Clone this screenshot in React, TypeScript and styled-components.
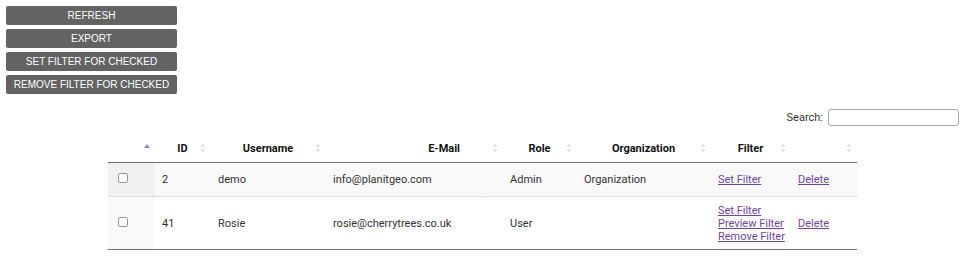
import React from "react";
import styled, { createGlobalStyle } from "styled-components";

interface IUser {
    id: number,
    username: string,
    email: string,
    role: string,
    organization: string,
    filters: string[]
}

const users: IUser[] = [
    { id: 2, username: "demo", email: "info@planitgeo.com", role: "Admin", organization: "Organization", filters: ["Set Filter"] },
    { id: 41, username: "Rosie", email: "rosie@cherrytrees.co.uk", role: "User", organization: "", filters: ["Set Filter", "Preview Filter", "Remove Filter"] },
];

const actions = ["REFRESH", "EXPORT", "SET FILTER FOR CHECKED", "REMOVE FILTER FOR CHECKED"];

// column widths taken from the header cells
const widths = [47, 56, 115, 177, 74, 134, 80, 66];

const SortIcon = ({ active }: { active?: boolean }) => (
    <svg width="6" height="10" viewBox="0 0 6 10">
        {active ? (
            <path d="M3 1 L6 5 L0 5 Z" fill="#8c8cd6" />
        ) : (
            <>
                <path d="M3 0.5 L5.5 4 L0.5 4 Z" fill="#e2e2e2" />
                <path d="M3 9.5 L5.5 6 L0.5 6 Z" fill="#e2e2e2" />
            </>
        )}
    </svg>
);

export default function App() {
    const headers = ["", "ID", "Username", "E-Mail", "Role", "Organization", "Filter", ""];

    return (
        <Page>
            <GlobalStyle />
            <Actions>
                {actions.map((a) => <ActionButton key={a}>{a}</ActionButton>)}
            </Actions>
            <SearchRow>
                <label>Search:</label>
                <SearchInput type="text" />
            </SearchRow>
            <Table>
                <colgroup>
                    {widths.map((w, i) => <col key={i} style={{ width: w }} />)}
                </colgroup>
                <thead>
                    <tr>
                        {headers.map((h, i) => (
                            <Th key={i}>
                                <HeadInner $right={h === "E-Mail"}>
                                    <span>{h}</span>
                                    <SortIcon active={i === 0} />
                                </HeadInner>
                            </Th>
                        ))}
                    </tr>
                </thead>
                <tbody>
                    {users.map((u, i) => (
                        <Row key={u.id} $odd={i % 2 == 0}>
                            <CheckCell $odd={i % 2 == 0}><Check type="checkbox" /></CheckCell>
                            <Td>{u.id}</Td>
                            <Td>{u.username}</Td>
                            <MailCell>{u.email}</MailCell>
                            <Td>{u.role}</Td>
                            <Td>{u.organization}</Td>
                            <Td>
                                {u.filters.map((f) => <LinkLine key={f}><Link href="#">{f}</Link></LinkLine>)}
                            </Td>
                            <Td><Link href="#">Delete</Link></Td>
                        </Row>
                    ))}
                </tbody>
            </Table>
        </Page>
    );
}

const GlobalStyle = createGlobalStyle`
    body {
        margin: 0;
        background: #fff;
        font-family: Roboto, "Liberation Sans", sans-serif;
    }
`

const Page = styled.div`
    width: 964px;
    height: 256px;
    overflow: hidden;
`

const Actions = styled.div`
    display: flex;
    flex-direction: column;
    gap: 4px;
    padding: 6px 0 0 6px;
`

const ActionButton = styled.button`
    width: 171px;
    height: 19px;
    padding: 0;
    border: none;
    border-radius: 2px;
    background: #636363;
    color: #fff;
    font-family: "Liberation Sans", Arial, sans-serif;
    font-size: 10px;
    line-height: 19px;
    text-align: center;
`

const SearchRow = styled.div`
    display: flex;
    justify-content: flex-end;
    align-items: center;
    gap: 5px;
    margin-top: 15px;
    padding-right: 5px;
    font-size: 11px;
    color: #333;
`

const SearchInput = styled.input`
    box-sizing: border-box;
    width: 131px;
    height: 17px;
    border: 1px solid #aaa;
    border-radius: 3px;
    padding: 0 4px;
    background: #fff;
`

const Table = styled.table`
    margin: 8px 0 0 108px;
    width: 749px;
    table-layout: fixed;
    border-collapse: collapse;
    font-size: 11px;
    color: #333;
    border-bottom: 1px solid #6e6e6e;
`

const Th = styled.th`
    height: 28px;
    padding: 0 5px 0 10px;
    border-bottom: 1px solid #6e6e6e;
    font-weight: bold;
    color: #111;
    vertical-align: middle;
`

const HeadInner = styled.div<{ $right?: boolean }>`
    display: grid;
    grid-template-columns: 1fr 6px;
    align-items: center;

    span {
        text-align: ${(p) => (p.$right ? "right" : "center")};
        padding-right: ${(p) => (p.$right ? "32px" : "0")};
    }

    svg {
        display: block;
    }
`

const Row = styled.tr<{ $odd: boolean }>`
    background: ${(p) => (p.$odd ? "#f9f9f9" : "#fff")};
    border-top: 1px solid #ddd;

    &:first-child {
        border-top: none;
        height: 34px;
    }

    &:last-child {
        height: 53px;
    }
`

const Td = styled.td`
    padding: 0 6px 0 7px;
    vertical-align: middle;
    white-space: nowrap;
`

const CheckCell = styled(Td)<{ $odd: boolean }>`
    padding-left: 10px;
    background: ${(p) => (p.$odd ? "#f1f1f1" : "#fafafa")};
`

const MailCell = styled(Td)`
    background-image: linear-gradient(to right, transparent 159px, #fff 159px, #fff 160px, transparent 160px);
`

const Check = styled.input`
    appearance: none;
    display: block;
    margin: 0 0 3px 0;
    width: 10px;
    height: 10px;
    border: 1px solid #999;
    border-radius: 2px;
    background: #fff;
`

const LinkLine = styled.div`
    line-height: 13px;
`

const Link = styled.a`
    color: #6f45a3;
    text-decoration: underline;
`
